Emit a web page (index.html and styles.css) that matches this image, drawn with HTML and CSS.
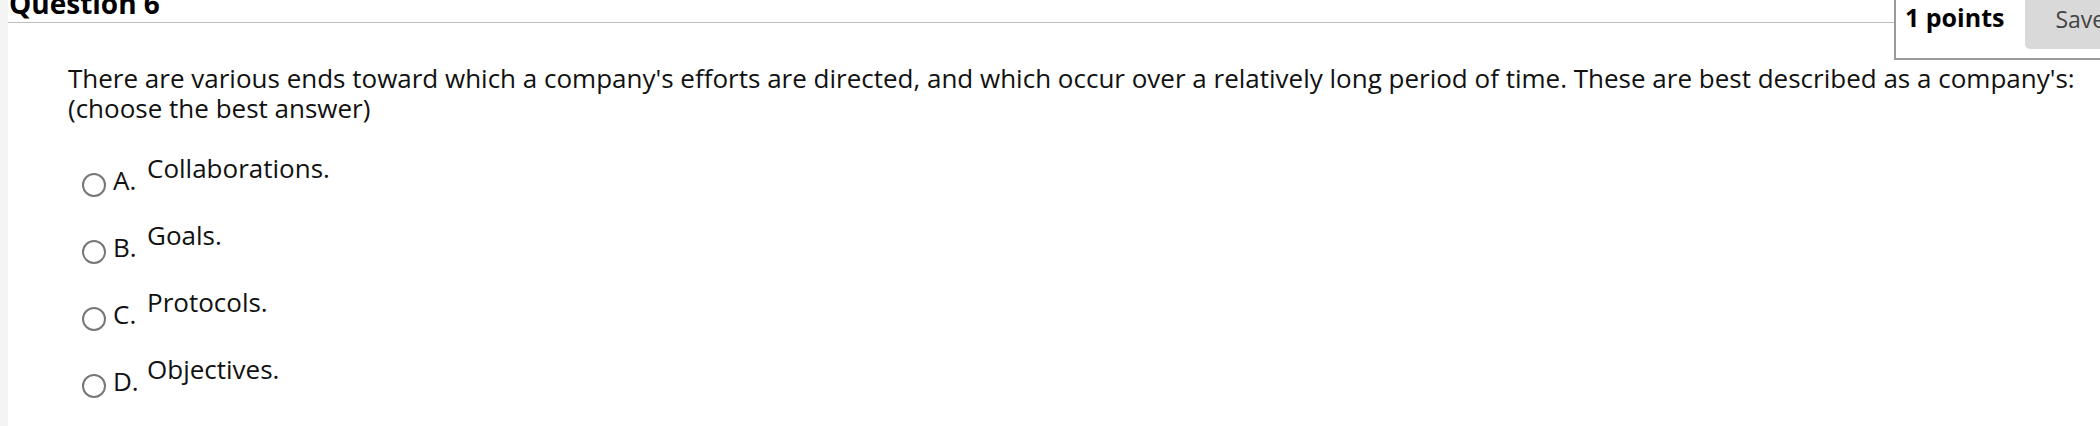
FILE: index.html
```html
<!DOCTYPE html>
<html lang="en">
<head>
<meta charset="utf-8">
<title>Question 6</title>
<link rel="stylesheet" href="styles.css">
</head>
<body>
<div class="page">
  <div class="header">
    <h2 class="title">Question 6</h2>
    <div class="points-box">
      <span class="points">1 points</span>
      <button class="save" type="button">Save Answer</button>
    </div>
  </div>
  <div class="question">
    <p class="prompt">There are various ends toward which a company's efforts are directed, and which occur over a relatively long period of time. These are best described as a company's:<br>(choose the best answer)</p>
    <ul class="options">
      <li class="option"><span class="radio"></span><span class="letter">A.</span><span class="answer">Collaborations.</span></li>
      <li class="option"><span class="radio"></span><span class="letter">B.</span><span class="answer">Goals.</span></li>
      <li class="option"><span class="radio"></span><span class="letter">C.</span><span class="answer">Protocols.</span></li>
      <li class="option"><span class="radio"></span><span class="letter">D.</span><span class="answer">Objectives.</span></li>
    </ul>
  </div>
</div>
</body>
</html>
```
FILE: styles.css
```css
html, body {
  margin: 0;
  padding: 0;
  overflow: hidden;
  background: #f4f4f4;
}
body {
  font-family: "Open Sans", "Liberation Sans", sans-serif;
  color: #111;
}
.page {
  margin-left: 8px;
  background: #fff;
  height: 426px;
}
.header {
  display: flex;
  align-items: flex-start;
}
.title {
  flex: 0 0 1886px;
  margin: -14px 0 0 0;
  padding: 0 0 2px 1px;
  font-size: 28px;
  line-height: 34px;
  font-weight: 700;
  color: #000;
  border-bottom: 1px solid #bdbdbd;
  box-sizing: border-box;
  height: 37px;
}
.points-box {
  flex: none;
  display: flex;
  align-items: flex-start;
  margin-top: -10px;
  padding-bottom: 9px;
  border-left: 2px solid #9a9a9a;
  border-bottom: 2px solid #9a9a9a;
  white-space: nowrap;
}
.points {
  padding: 10px 21px 0 9px;
  font-size: 25px;
  line-height: 34px;
  font-weight: 700;
  color: #000;
}
.save {
  font-family: inherit;
  font-size: 23px;
  line-height: 30px;
  color: #444;
  background: #d9d9d9;
  border: 0;
  border-bottom-left-radius: 5px;
  padding: 14px 20px 15px 30px;
  margin: 0;
}
.question {
  padding-left: 60px;
}
.prompt {
  margin: 4px 0 0 0;
  font-size: 26px;
  line-height: 29.5px;
}
.options {
  list-style: none;
  margin: 31px 0 0 0;
  padding: 0;
  display: flex;
  flex-direction: column;
  gap: 24px;
}
.option {
  display: flex;
  align-items: flex-start;
  font-size: 26px;
  line-height: 29.5px;
}
.radio {
  width: 24px;
  height: 24px;
  box-sizing: border-box;
  border: 2px solid #777;
  border-radius: 50%;
  margin: 19px 7px 0 14px;
  flex: none;
}
.letter {
  width: 34px;
  margin-top: 12px;
  flex: none;
}
```
